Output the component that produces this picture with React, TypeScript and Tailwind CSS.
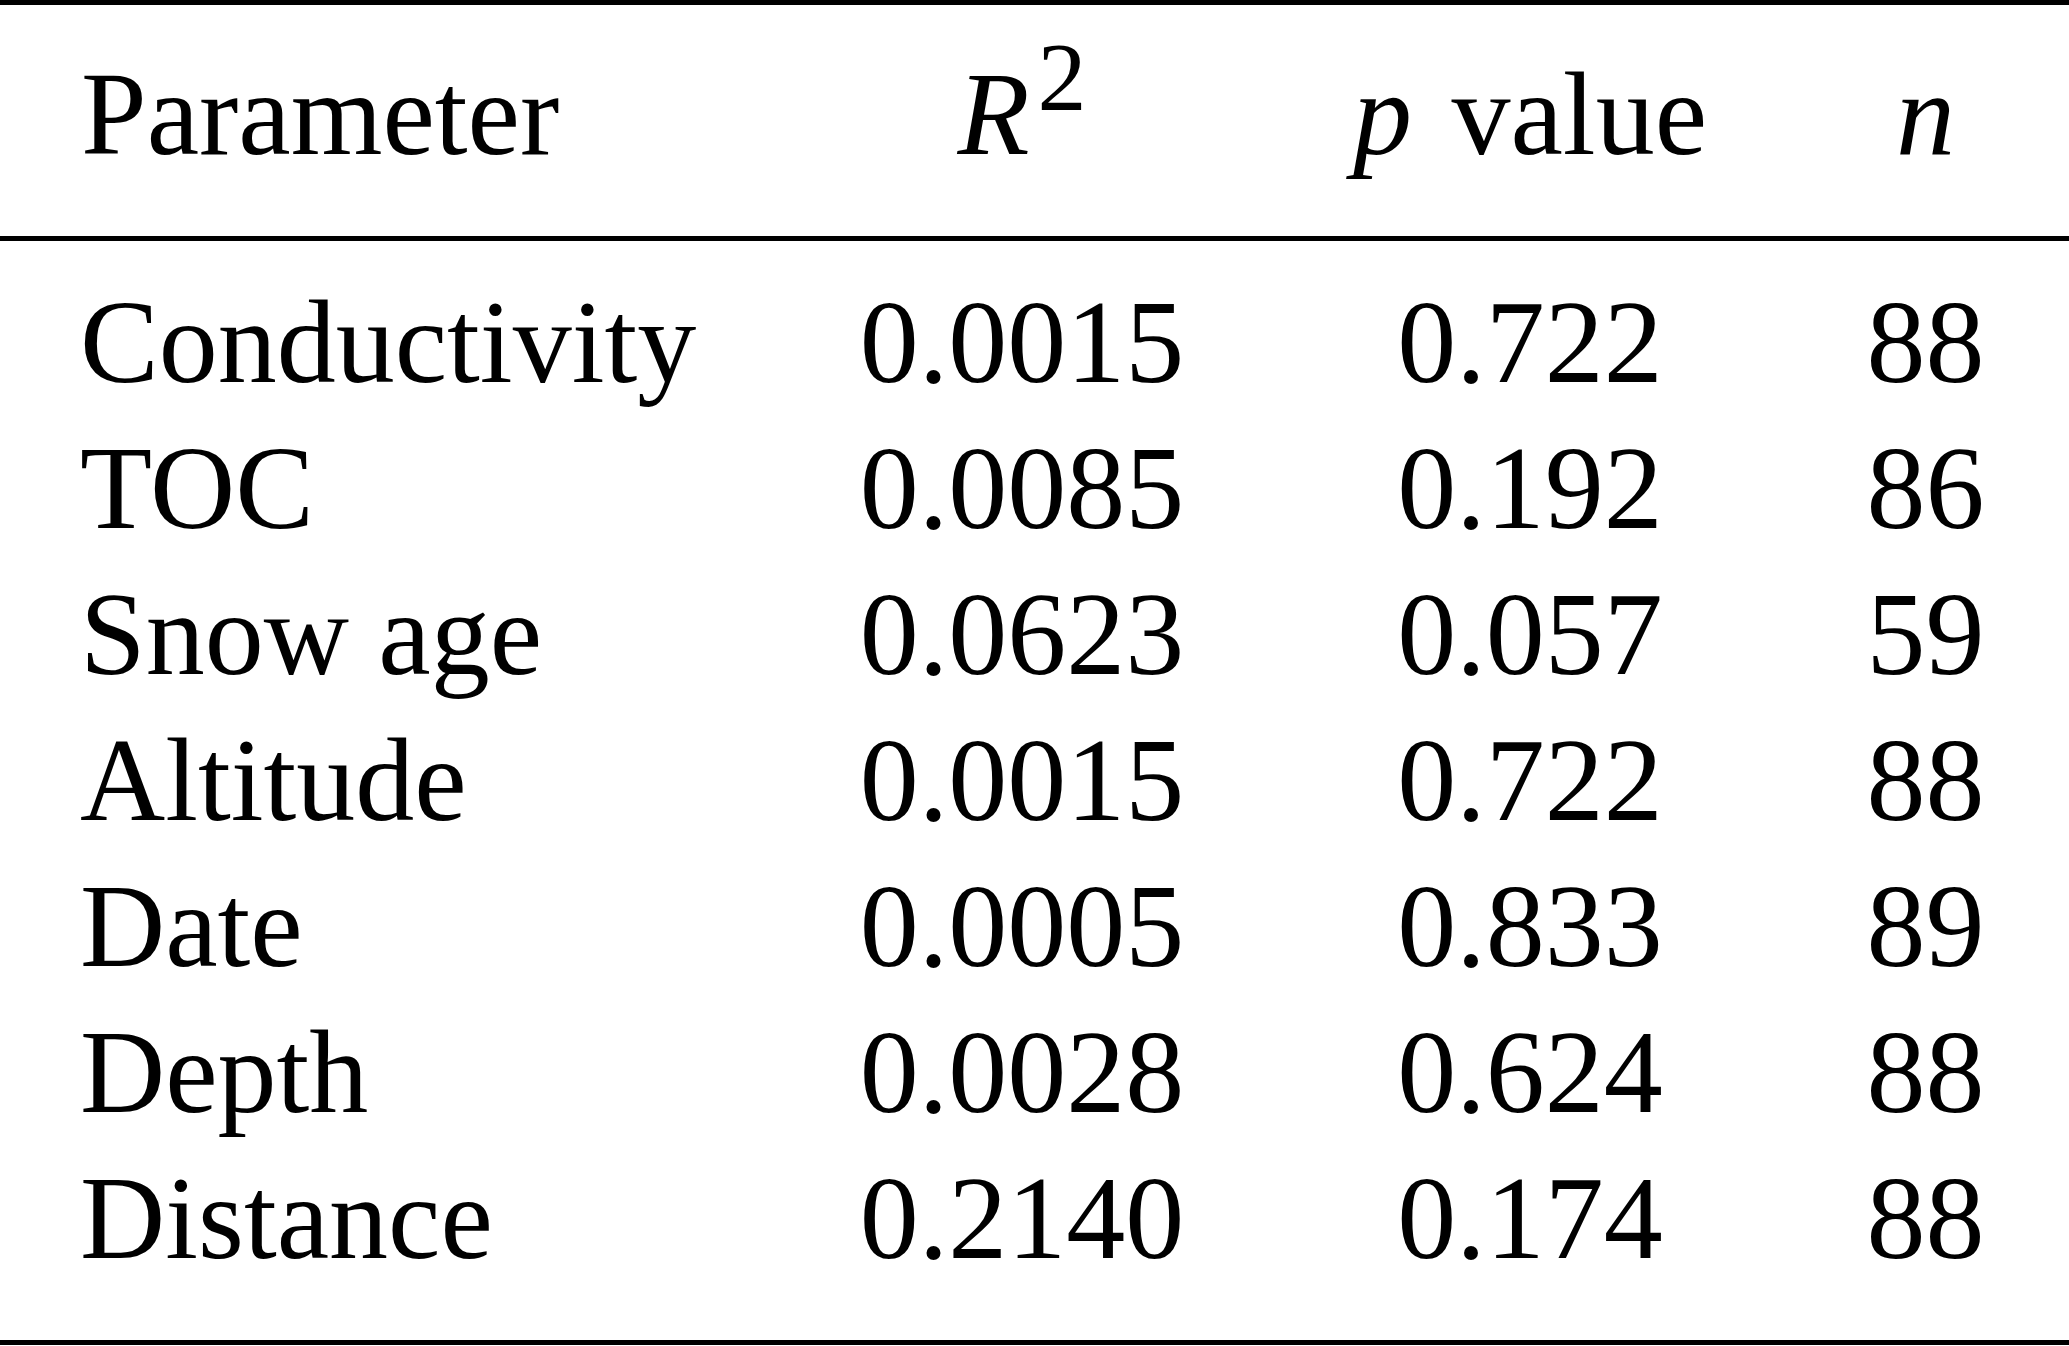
import React from 'react';

const rows: [string, string, string, string][] = [
  ['Conductivity', '0.0015', '0.722', '88'],
  ['TOC', '0.0085', '0.192', '86'],
  ['Snow age', '0.0623', '0.057', '59'],
  ['Altitude', '0.0015', '0.722', '88'],
  ['Date', '0.0005', '0.833', '89'],
  ['Depth', '0.0028', '0.624', '88'],
  ['Distance', '0.2140', '0.174', '88'],
];

const grid = 'grid grid-cols-[800px_444px_572px_219px] leading-[146px]';

export default function App() {
  return (
    <div className="w-[2069px] h-[1346px] bg-white text-black text-[118px] font-['Liberation_Serif',serif]">
      <div className="border-t-[5px] border-b-[5px] border-black">
        {/* header */}
        <div className={`${grid} pt-[37px] pb-[48px] border-b-[5px] border-black`}>
          <div className="pl-[81px]">Parameter</div>
          <div className="text-center whitespace-nowrap">
            <i>R</i>
            <span className="text-[98px] leading-[0] align-[44px] ml-[8px]">2</span>
          </div>
          <div className="text-center whitespace-nowrap">
            <i className="mr-[10px]">p</i> value
          </div>
          <div className="text-center">
            <i>n</i>
          </div>
        </div>

        {/* body */}
        <div className="pt-[29px] pb-[48px]">
          {rows.map(([name, r2, p, n]) => (
            <div key={name} className={grid}>
              <div className="pl-[80px] whitespace-nowrap">{name}</div>
              <div className="text-center">{r2}</div>
              <div className="text-center">{p}</div>
              <div className="text-center">{n}</div>
            </div>
          ))}
        </div>
      </div>
    </div>
  );
}
